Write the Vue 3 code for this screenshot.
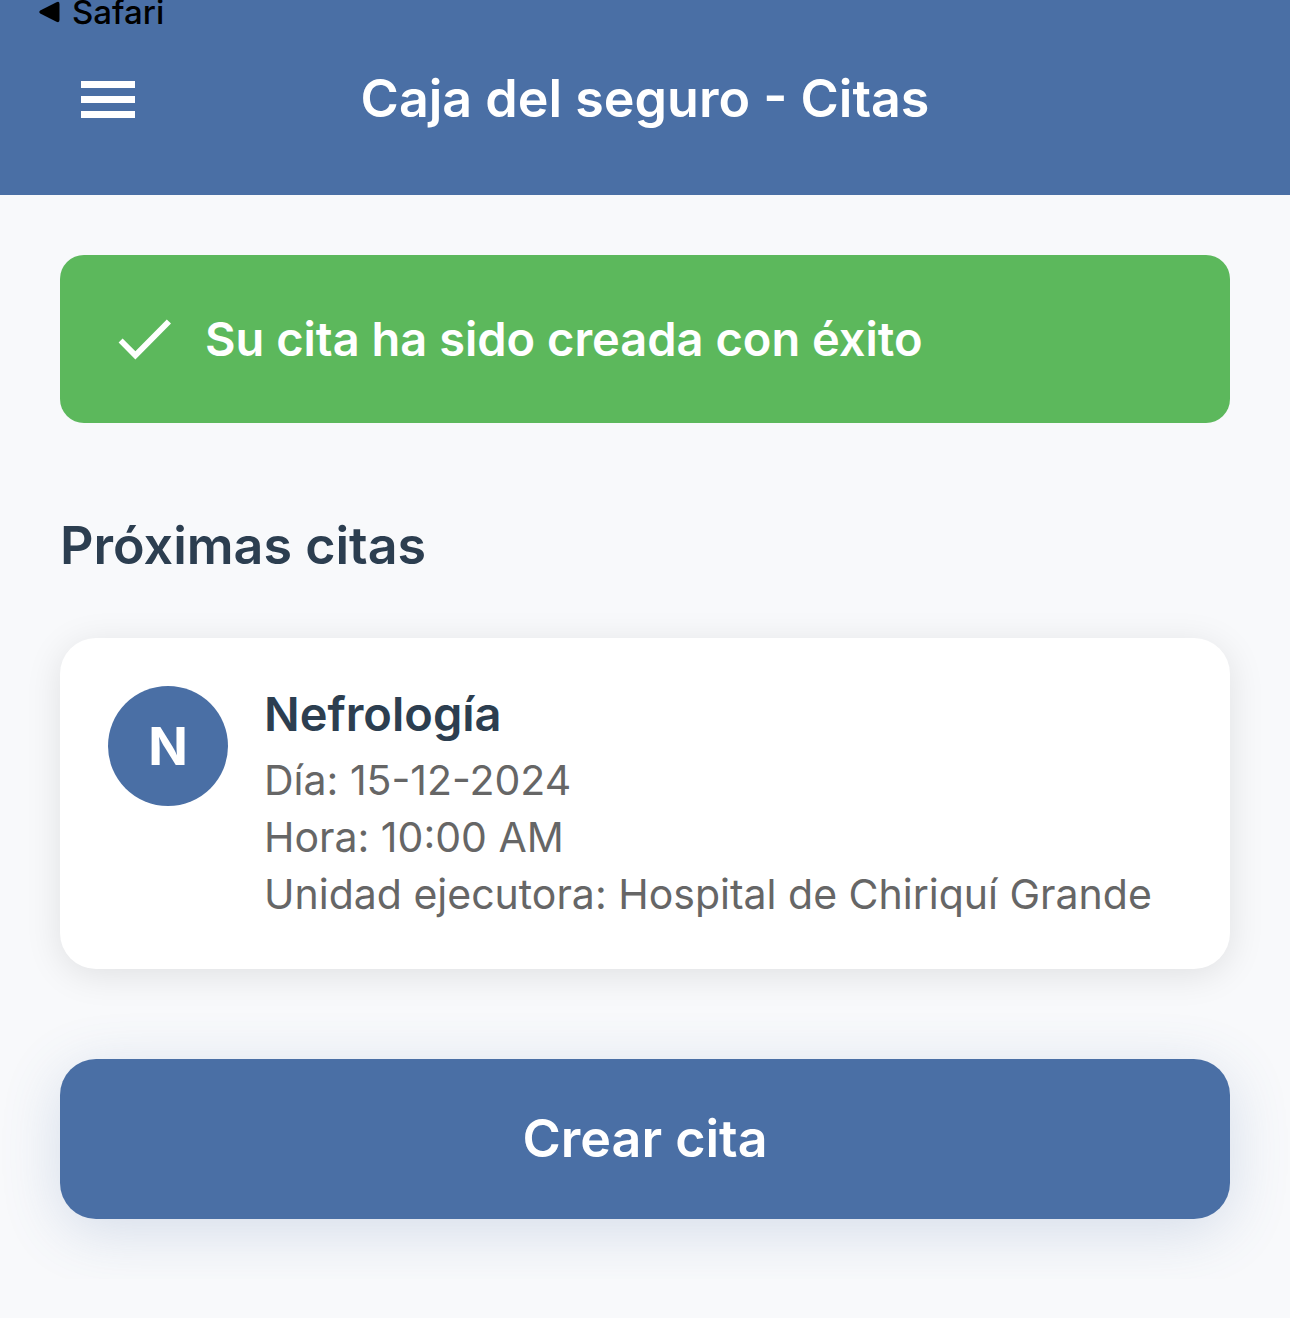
<script setup>
const appointments = [
  {
    initial: 'N',
    specialty: 'Nefrología',
    details: ['Día: 15-12-2024', 'Hora: 10:00 AM', 'Unidad ejecutora: Hospital de Chiriquí Grande'],
  },
]
</script>

<template>
  <div class="page">
    <header class="header">
      <a class="back" href="#">
        <svg width="21" height="22" viewBox="0 0 21 22" aria-hidden="true"><path d="M1.200 9.600 17.500 1.200Q20.500 0 20.500 3V19Q20.500 22 17.500 20.800L1.200 12.400Q-0.600 11 1.200 9.600Z" fill="currentColor" /></svg>
        <span>Safari</span>
      </a>
      <div class="bar">
        <button class="menu" type="button" aria-label="Menú">
          <svg width="54" height="37" viewBox="0 0 54 37"><path d="M0 0H54V7H0ZM0 15H54V22H0ZM0 30H54V37H0Z" fill="currentColor" /></svg>
        </button>
        <h1 class="title">Caja del seguro - Citas</h1>
      </div>
    </header>

    <main class="content">
      <p class="alert" role="status">
        <svg width="54" height="42" viewBox="0 0 54 42" aria-hidden="true"><path d="M17.400 41.600 0.600 24.600 4.600 20.400 17.400 33.200 48.800 1.400 53 5.400Z" fill="currentColor" /></svg>
        <span>Su cita ha sido creada con éxito</span>
      </p>

      <h2 class="section-title">Próximas citas</h2>

      <article v-for="item in appointments" :key="item.specialty" class="card">
        <span class="avatar">{{ item.initial }}</span>
        <div class="info">
          <h3 class="specialty">{{ item.specialty }}</h3>
          <p v-for="line in item.details" :key="line" class="detail">{{ line }}</p>
        </div>
      </article>

      <button class="create" type="button">Crear cita</button>
    </main>
  </div>
</template>

<style>
body {
  background: #f8f9fb;
}
</style>

<style scoped>
.page {
  font-family: Inter, sans-serif;
  color: #2c3e50;
}

h1,
h2,
h3,
p {
  margin: 0;
}

svg {
  display: block;
  flex: none;
}

.header {
  padding-bottom: 21px;
  background: #4a6fa5;
  color: #fff;
}

.back {
  display: flex;
  align-items: center;
  gap: 12px;
  padding-left: 39px;
  color: #000;
  font-size: 33px;
  font-weight: 500;
  line-height: 24px;
  text-decoration: none;
}

.bar {
  display: grid;
  grid-template-columns: 56px 1fr 56px;
  align-items: center;
  min-height: 150px;
  padding: 0 81px;
}

.menu {
  padding: 0;
  border: 0;
  background: none;
  color: inherit;
}

.title {
  font-size: 52px;
  font-weight: 600;
  line-height: 64px;
  text-align: center;
}

.content {
  padding: 60px;
}

.alert {
  display: flex;
  align-items: center;
  gap: 33px;
  padding: 54px 58px;
  border-radius: 24px;
  background: #5cb85c;
  color: #fff;
  font-size: 47px;
  font-weight: 600;
  line-height: 60px;
}

.section-title {
  margin: 90px 0 59px;
  font-size: 52px;
  font-weight: 600;
  line-height: 66px;
}

.card {
  display: flex;
  gap: 36px;
  padding: 48px 48px 46px;
  border-radius: 36px;
  background: #fff;
  box-shadow: 0 6px 36px rgba(0, 0, 0, 0.1);
}

.avatar {
  display: flex;
  flex: none;
  align-items: center;
  justify-content: center;
  width: 120px;
  height: 120px;
  border-radius: 50%;
  background: #4a6fa5;
  color: #fff;
  font-size: 52px;
  font-weight: 700;
}

.specialty {
  margin-bottom: 10px;
  font-size: 47px;
  font-weight: 600;
  line-height: 56px;
}

.detail {
  color: #666;
  font-size: 41px;
  line-height: 57px;
}

.create {
  display: block;
  width: 100%;
  margin-top: 90px;
  padding: 48px;
  border: 0;
  border-radius: 36px;
  background: #4a6fa5;
  box-shadow: 0 12px 60px rgba(74, 111, 165, 0.2);
  color: #fff;
  font-family: inherit;
  font-size: 52px;
  font-weight: 600;
  line-height: 64px;
}
</style>
